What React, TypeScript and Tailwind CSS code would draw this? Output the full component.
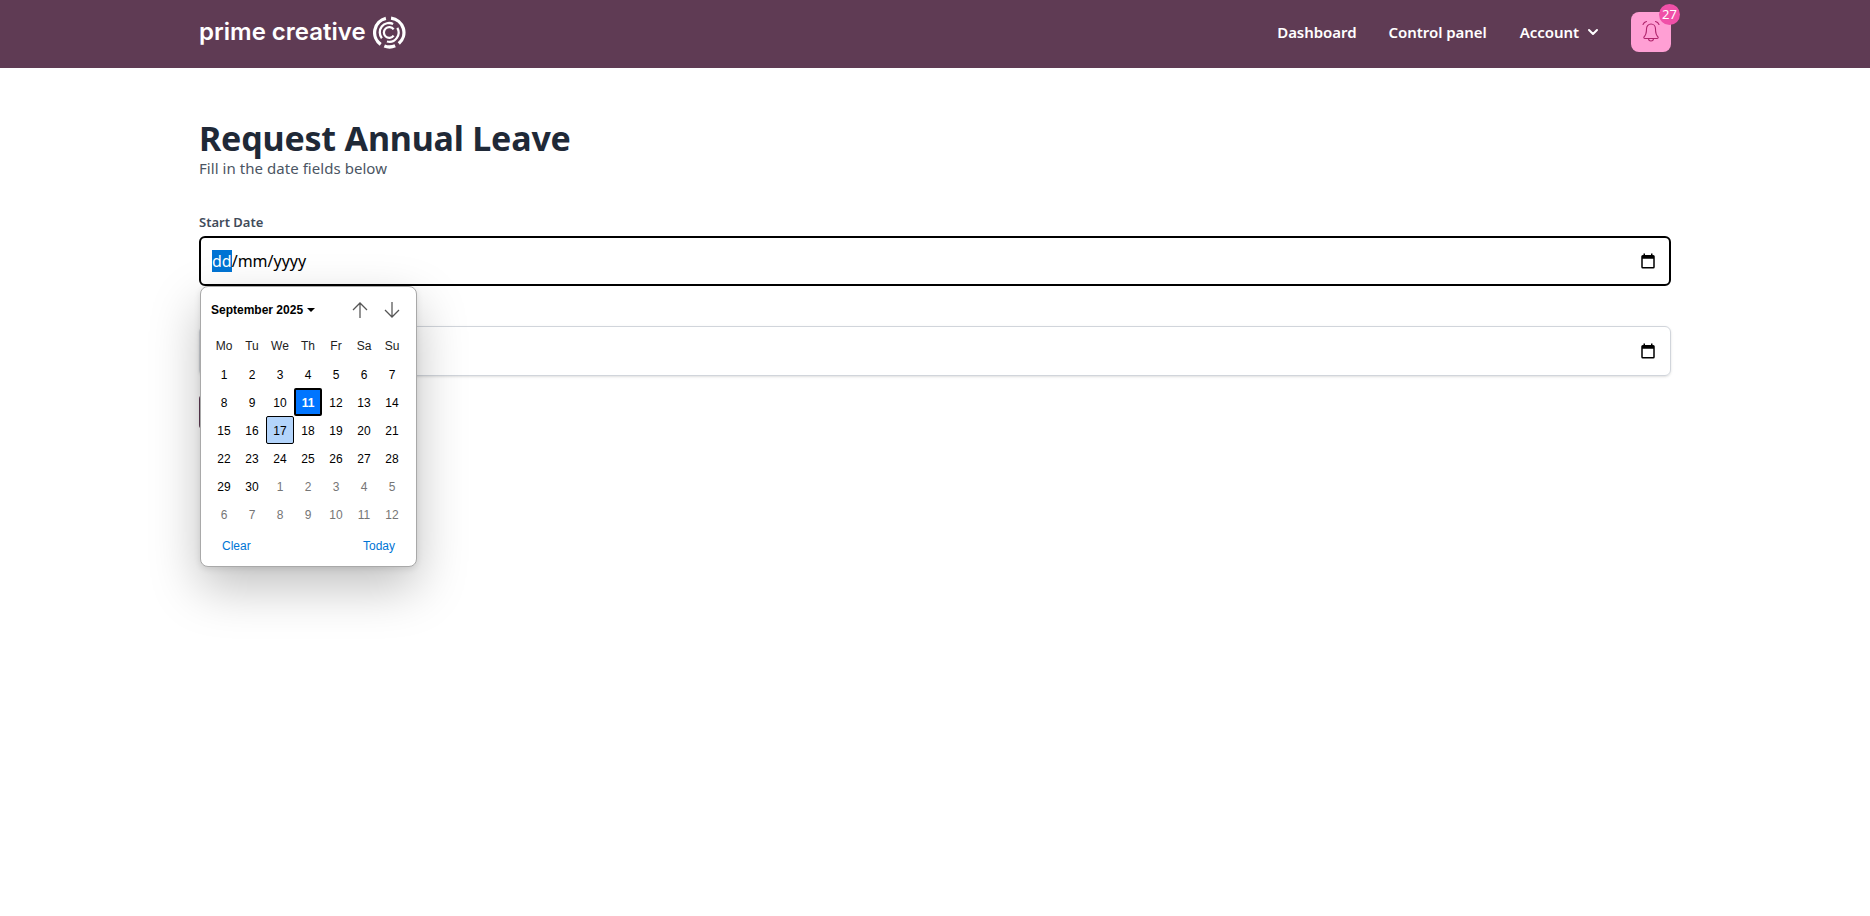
import { ChevronDown } from "lucide-react";

const dayNames = ["Mo", "Tu", "We", "Th", "Fr", "Sa", "Su"];
const septemberDays = Array.from({ length: 30 }, (_, i) => i + 1);
const octoberDays = Array.from({ length: 12 }, (_, i) => i + 1);

function Logo() {
  return (
    <div className="flex items-center gap-[7px] text-white">
      <span className="font-['Inter',sans-serif] text-[24px] font-semibold leading-none">prime creative</span>
      <svg viewBox="0 0 32 32" className="h-[33px] w-[33px]" fill="none" stroke="currentColor">
        <path d="M7.5 27.5A14 14 0 0 1 12.5 2.4" strokeWidth="3.2" />
        <path d="M17.5 2.1A14 14 0 0 1 25 26.7" strokeWidth="3.2" />
        <path d="M11 29.1A14 14 0 0 0 21.5 28.9" strokeWidth="3.2" />
        <path d="M8.6 21.5A9 9 0 0 1 19.5 7.7" strokeWidth="2.2" />
        <path d="M23.6 11.5A9 9 0 0 1 13.5 24.7" strokeWidth="2.2" />
        <path d="M20 13A5.2 5.2 0 1 0 20 19" strokeWidth="2.2" />
      </svg>
    </div>
  );
}

function NotificationBell() {
  return (
    <svg viewBox="0 0 24 24" className="h-6 w-6" fill="none" stroke="#b0256c" strokeWidth="1.1" strokeLinecap="round" strokeLinejoin="round">
      <path d="M7.5 9C7.5 6 9.5 4 12 4s4.5 2 4.5 5c0 4 1 6.5 2.5 8 .5.8 0 1.5-1 1.5H6c-1 0-1.5-.7-1-1.5 1.5-1.5 2.5-4 2.5-8Z" />
      <path d="M9.5 18.5a2.5 2.5 0 0 0 5 0" />
      <path d="M4 4.5Q5 2 7.5 1.5" />
      <path d="M20 4.5Q19 2 16.5 1.5" />
    </svg>
  );
}

function CalendarGlyph() {
  return (
    <svg viewBox="0 0 24 24" className="h-[18px] w-[18px]" fill="black">
      <path d="M19 4h-1V2h-2v2H8V2H6v2H5a2 2 0 0 0-2 2v14a2 2 0 0 0 2 2h14a2 2 0 0 0 2-2V6a2 2 0 0 0-2-2zm0 16H5V9h14v11z" />
    </svg>
  );
}

function DatePopup() {
  return (
    <div className="absolute left-[1px] top-[74px] z-10 h-[281px] w-[217px] rounded-[8px] border border-[#a9a9a9] bg-white px-[9px] font-['Liberation_Sans',Arial,sans-serif] text-black shadow-[0_20px_50px_rgba(0,0,0,0.25),0_2px_6px_rgba(0,0,0,0.1)]">
      <div className="flex h-[45px] items-center justify-between pl-[1px]">
        <span className="flex items-center gap-[4px] text-[12px] font-bold">
          September 2025
          <span className="h-0 w-0 border-x-[4px] border-t-[4px] border-x-transparent border-t-black" />
        </span>
        <div className="flex items-center gap-[16px] pr-[7px]">
          <svg viewBox="0 0 16 16" className="h-[16px] w-[16px]" fill="none" stroke="#555" strokeWidth="1.25">
            <path d="M8 16V1M1 8l7-7 7 7" />
          </svg>
          <svg viewBox="0 0 16 16" className="h-[16px] w-[16px]" fill="none" stroke="#555" strokeWidth="1.25">
            <path d="M8 0V15M1 8l7 7 7-7" />
          </svg>
        </div>
      </div>
      <div className="grid grid-cols-[repeat(7,28px)] auto-rows-[28px] text-center text-[12px] leading-[30px]">
        {dayNames.map((d) => (
          <span key={d} className="leading-[28px] text-[#222]">{d}</span>
        ))}
        {septemberDays.map((d) => (
          <span
            key={d}
            className={
              d === 11
                ? "rounded-[2px] border-2 border-black bg-[#0075ff] font-bold leading-[26px] text-white"
                : d === 17
                  ? "rounded-[2px] border border-black bg-[#b3d4fb] leading-[28px]"
                  : ""
            }
          >
            {d}
          </span>
        ))}
        {octoberDays.map((d) => (
          <span key={`next-${d}`} className="text-[#767676]">{d}</span>
        ))}
      </div>
      <div className="mt-[4px] flex justify-between px-[12px] text-[12px] leading-[28px] text-[#0075d5]">
        <span>Clear</span>
        <span>Today</span>
      </div>
    </div>
  );
}

export default function App() {
  return (
    <div className="min-h-[916px] bg-white font-['Noto_Sans',sans-serif]">
      <header className="h-[68px] bg-[#5f3b54]">
        <div className="mx-auto flex h-full max-w-[1536px] items-center justify-between px-8 pb-[4px]">
          <Logo />
          <nav className="flex items-center text-[15px] font-semibold tracking-[-0.05px] text-white">
            <a className="mr-8">Dashboard</a>
            <a className="mr-[33px]">Control panel</a>
            <a className="mr-[30px] flex items-center gap-[6px]">
              Account
              <ChevronDown className="h-4 w-4" strokeWidth={3} />
            </a>
            <div className="relative flex h-10 w-10 items-center justify-center rounded-lg bg-[#ff9fd4]">
              <NotificationBell />
              <span className="absolute right-[-9px] top-[-8px] flex h-[21px] w-[21px] items-center justify-center rounded-full bg-[#f050a8] text-[13px] font-normal text-white">
                27
              </span>
            </div>
          </nav>
        </div>
      </header>

      <main className="mx-auto max-w-[1536px] px-8 pt-[50px]">
        <h1 className="text-[34px] font-bold leading-[40px] tracking-[-0.2px] text-[#1f2937]">Request Annual Leave</h1>
        <p className="text-[15px] leading-[20px] tracking-[0.05px] text-[#4b5563]">Fill in the date fields below</p>

        <form className="mt-[34px] flex flex-col items-start gap-4">
          <div className="relative w-full">
            <label className="block text-[13px] font-semibold leading-[20px] text-[#414b5a]">Start Date</label>
            <div className="mt-[4px] flex h-[50px] items-center justify-between rounded-md border-2 border-black pl-[11px] pr-[12px] text-[16px] text-black">
              <span>
                <span className="bg-[#0074d4] text-white">dd</span>/mm/yyyy
              </span>
              <CalendarGlyph />
            </div>
            <DatePopup />
          </div>

          {/* label and value of this field sit behind the open popup */}
          <div className="w-full pt-[24px]">
            <div className="flex h-[50px] items-center justify-end rounded-md border border-[#d1d5db] pr-[13px] shadow-sm">
              <CalendarGlyph />
            </div>
          </div>

          <button type="button" className="mt-[3px] h-[34px] w-[100px] rounded bg-[#5f3b54]" />
        </form>
      </main>
    </div>
  );
}
